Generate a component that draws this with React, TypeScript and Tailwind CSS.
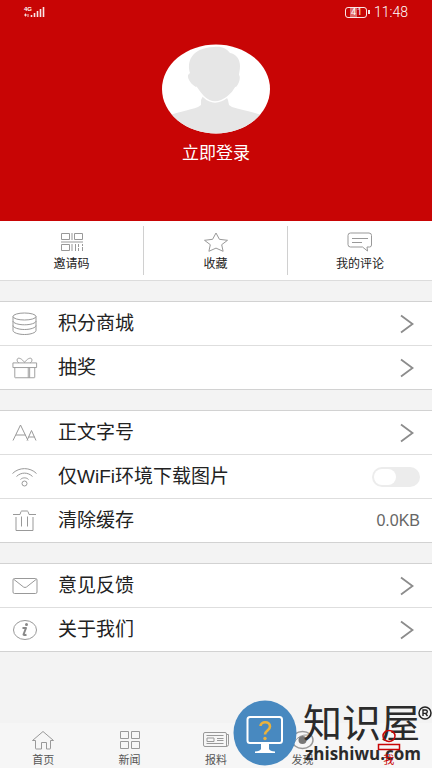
import { useState, type ReactNode } from "react";

const SignalIcon = () => (
  <svg width="21" height="12" viewBox="0 0 21 12" fill="none" stroke="#fff">
    <path d="M0 9h3M4 8v3M1.5 7.5v3" strokeWidth="1" opacity="0.8" />
    <path d="M7.5 9v2M10.5 7v4M13.5 5v6M16.5 3v8M19.5 1v10" strokeWidth="1.6" opacity="0.9" />
  </svg>
);

const Avatar = () => (
  <svg width="108" height="90" viewBox="0 0 108 90">
    <defs>
      <clipPath id="avatar-clip">
        <ellipse cx="54" cy="45" rx="54" ry="44.5" />
      </clipPath>
    </defs>
    <g clipPath="url(#avatar-clip)">
      <rect width="108" height="90" fill="#fff" />
      <path
        d="M0 74C12 69 28 66 36 63L39 61L39 56L41 52C46 57 58 57 64 52L66 56L67 61L70 63C80 66 97 69 108 74V90H0Z"
        fill="#e6e6e6"
      />
      <path
        d="M52 3C60 2 65 5 68 9C74 10 78 15 78 22C78 26 77 29 77 31C79 33 77 40 74 43C71 49 62 58 53 58C44 58 38 49 34 43C30 41 25 35 26 31L28 29C25 19 28 4 52 3Z"
        fill="#e6e6e6"
      />
      <path d="M34 43C38 49 44 58 53 58C62 58 71 49 74 43" fill="none" stroke="#fff" strokeWidth="1.5" />
    </g>
  </svg>
);

const Chevron = () => (
  <svg width="14" height="20" viewBox="0 0 14 20" fill="none" stroke="#8c8c8c" strokeWidth="1.8">
    <path d="M1 1.5 12.5 10 1 18.5" />
  </svg>
);

const Line = ({ w, h, children }: { w: number; h: number; children: ReactNode }) => (
  <svg
    width={w}
    height={h}
    viewBox={`0 0 ${w} ${h}`}
    fill="none"
    stroke="#999"
    strokeWidth="1"
    strokeLinejoin="round"
  >
    {children}
  </svg>
);

const shortcuts = [
  {
    label: "邀请码",
    icon: (
      <Line w={24} h={20}>
        <path d="M1.5 1.5h8v6h-8zM14.5 1.5h8v6h-8zM1.5 12.5h8v6h-8zM12 1v7M1 10h22M12 12v7M15.5 12v7M18.5 12v3M18.5 16v3M22.5 12v2M22.5 15v4" />
      </Line>
    ),
  },
  {
    label: "收藏",
    icon: (
      <Line w={26} h={20}>
        <path d="m13 1 3.4 6.3 8.1 1-5.8 4.4 1.4 6.6-7.1-3.2-7.1 3.2 1.4-6.6L1.5 8.3l8.1-1z" />
      </Line>
    ),
  },
  {
    label: "我的评论",
    icon: (
      <Line w={26} h={20}>
        <path d="M3.5 1h18.5q2.5 0 2.5 2.5v9.5q0 2-2 2h-2.5l.5 4-5-4h-12q-2.5 0-2.5-2.5v-9q0-2.5 2.5-2.500zM5 6.500h16M5 10.500h10" />
      </Line>
    ),
  },
];

type Item = { label: string; icon: ReactNode; kind?: "switch" | "value" };

const groups: Item[][] = [
  [
    {
      label: "积分商城",
      icon: (
        <Line w={26} h={24}>
          <ellipse cx="12.5" cy="4.5" rx="11.5" ry="3.5" />
          <path d="M1 4.5v14c0 2 5 4 11.5 4s11.5-2 11.5-4v-14M1 9c0 2 5 3.8 11.5 3.8S24 11 24 9M1 13.5c0 2 5 4 11.5 4s11.5-2 11.5-4" />
        </Line>
      ),
    },
    {
      label: "抽奖",
      icon: (
        <Line w={28} h={24}>
          <path d="M1 6.5h25.5v5H1zM3 11.5v10.5q0 .5.5.5h20.5q.5 0 .5-.5v-10.5M17.5 11.5v11M19 11.5v11M13.5 6C10 1 5.5 0 5.5 3.5c0 1.5 1 2.5 2 3M13.500 6C17 1 21.5 0 21.5 3.5c0 1.5-1 2.5-2 3" />
        </Line>
      ),
    },
  ],
  [
    {
      label: "正文字号",
      icon: (
        <Line w={26} h={18}>
          <path d="M1 16.5 8.5 1l7.5 15.5M4 11h9.5M15 16.5l4.5-10 4.5 10M16.5 13h6" />
        </Line>
      ),
    },
    {
      label: "仅WiFi环境下载图片",
      kind: "switch",
      icon: (
        <Line w={26} h={20}>
          <path d="M.5 6.5C7 0 18 0 24.5 6.5M4.5 9.5c4.5-4.5 11.5-4.5 16 0M8.5 12.5c2-2.2 6-2.2 8 0" />
          <circle cx="12.5" cy="16.5" r="2.5" />
        </Line>
      ),
    },
    {
      label: "清除缓存",
      kind: "value",
      icon: (
        <Line w={26} h={22}>
          <path d="M1 4.5h7l1-3q.3-.5 1-.5h5q.7 0 1 .5l1 3h7M4 7v13.5h17V7M9.5 6.5v10M15.5 6.5v10" />
        </Line>
      ),
    },
  ],
  [
    {
      label: "意见反馈",
      icon: (
        <Line w={26} h={18}>
          <rect x="1" y="1.5" width="24" height="15" rx="1.5" />
          <path d="m2 2.5 9.5 7.5q1.5 1 3 0L24 2.5" />
        </Line>
      ),
    },
    {
      label: "关于我们",
      icon: (
        <Line w={26} h={22}>
          <ellipse cx="13" cy="11" rx="11.5" ry="9.5" />
          <path d="M10.5 9h3.5l-2.5 6.5q0 1 3 .2" strokeWidth="2" stroke="#888" />
          <circle cx="14.5" cy="5.5" r="1.5" fill="#888" stroke="none" />
        </Line>
      ),
    },
  ],
];

const tabs = [
  {
    label: "首页",
    icon: (
      <Line w={24} h={20}>
        <path d="M4.5 10.5H1.5L12 1.5l10.5 9h-3v8q0 .5-.5.5h-3.5v-6.5h-5V19H5q-.5 0-.5-.5z" />
      </Line>
    ),
  },
  {
    label: "新闻",
    icon: (
      <Line w={24} h={20}>
        <path d="M2.5 1.5h8v7h-8zM13.5 1.5h8v7h-8zM2.5 11.5h8v7h-8zM13.5 11.5h8v7h-8z" />
      </Line>
    ),
  },
  {
    label: "报料",
    icon: (
      <Line w={28} h={18}>
        <path d="M25 3.5h1.5v10q0 2-2.5 2M3 1.5h20q1.5 0 1.5 1.5v12.5H3q-1.5 0-1.5-1.5V3q0-1.5 1.5-1.5zM4.5 4.5h17M15 7.5h6.5M15 9.5h6.5M4.5 12.5h17M5 7h7v3.5H5z" />
      </Line>
    ),
  },
  {
    label: "发现",
    icon: (
      <Line w={24} h={20}>
        <ellipse cx="12.5" cy="10" rx="10.5" ry="8.5" strokeWidth="1.5" />
        <path d="M4 13q4-9 15-8" />
        <circle cx="12.5" cy="10" r="4" fill="#777" stroke="none" />
      </Line>
    ),
  },
];

const Watermark = () => (
  <div className="pointer-events-none absolute right-0 bottom-0 flex items-end gap-1.5">
    <svg width="64" height="66" viewBox="0 0 64 66" className="mb-0.5">
      <ellipse cx="32" cy="33" rx="31.5" ry="32.5" fill="#4889c0" />
      <rect x="14.5" y="17" width="34.5" height="26" rx="2.5" fill="none" stroke="#fff" strokeWidth="2" />
      <path d="M28 43h8v6q1 2 6 2.5v1.5H22v-1.5q5-.5 6-2.5z" fill="#fff" />
      <path d="M27.5 26c0-5 9.5-5 9.5.5 0 4-5 4-5 8" fill="none" stroke="#e9b23d" strokeWidth="2.6" />
      <circle cx="32" cy="38.5" r="1.7" fill="#e9b23d" />
    </svg>
    <div className="flex flex-col pb-1 text-[#2b2b2b]">
      <div className="flex items-start">
        <span className="text-[39px] leading-10">知识屋</span>
        <svg width="14" height="14" viewBox="0 0 14 14" fill="none" stroke="#222" className="mt-0.5 -ml-0.5">
          <circle cx="7" cy="7" r="6" strokeWidth="1.5" />
          <path d="M5 10V4h2.5q1.8 0 1.8 1.7T7.5 7.4H5m2.5 0L9.5 10" strokeWidth="1.4" />
        </svg>
      </div>
      <span className="pl-0.5 font-['Open_Sans',sans-serif] text-[17px] leading-5 font-bold">zhishiwu.com</span>
    </div>
  </div>
);

export default function App() {
  const [wifiOnly, setWifiOnly] = useState(false);

  return (
    <div className="relative flex min-h-screen flex-col bg-[#f3f3f3] font-['Liberation_Sans','Noto_Sans_CJK_SC',sans-serif] text-[#222]">
      {/* Profile header */}
      <header className="flex flex-col items-center bg-[#c80505] pb-[55px] text-white">
        <div className="flex h-6 w-full items-center justify-between px-6">
          <div className="flex items-center">
            <span className="relative">
              <SignalIcon />
              <span className="absolute top-0 left-0 text-[6px] leading-[6px] font-bold">4G</span>
            </span>
          </div>
          <div className="flex items-center gap-1 font-['Roboto',sans-serif] text-[14px] leading-4">
            <span className="flex items-center gap-px">
              <span className="flex h-[11px] w-[22px] items-center justify-center rounded-[3px] border border-white/90 text-[9px] leading-none">
                <span className="bg-white/40 px-px">4</span>1
              </span>
              <span className="h-1 w-0.5 bg-white/90" />
            </span>
            <span className="font-light">11:48</span>
          </div>
        </div>
        <button type="button" className="mt-5 flex flex-col items-center">
          <Avatar />
          <span className="mt-2 text-[17px] leading-6">立即登录</span>
        </button>
      </header>

      {/* Shortcuts */}
      <section className="grid grid-cols-3 divide-x divide-[#d0d0d0] border-b border-[#dcdcdc] bg-white py-[5px]">
        {shortcuts.map((s) => (
          <button key={s.label} type="button" className="flex h-[49px] flex-col items-center gap-1 pt-1.5 text-[12px] leading-4">
            {s.icon}
            {s.label}
          </button>
        ))}
      </section>

      {/* Settings */}
      <main className="flex flex-1 flex-col gap-5 pt-5 pb-6">
        {groups.map((group, i) => (
          <ul key={i} className="divide-y divide-[#dedede] border-y border-[#d2d2d2] bg-white">
            {group.map((item) => {
              const inner = (
                <>
                  <span className="flex w-[26px] shrink-0 justify-center">{item.icon}</span>
                  <span className="flex-1 text-left text-[19px] leading-6">{item.label}</span>
                </>
              );
              return (
                <li key={item.label}>
                  {item.kind === "switch" ? (
                    <label className="flex h-[43px] items-center gap-5 px-3">
                      {inner}
                      <input
                        type="checkbox"
                        checked={wifiOnly}
                        onChange={(e) => setWifiOnly(e.target.checked)}
                        className="flex h-5 w-12 appearance-none items-center rounded-full bg-[#ececec] px-0.5 before:h-4 before:w-[22px] before:rounded-full before:bg-white checked:justify-end checked:bg-[#c80505]"
                      />
                    </label>
                  ) : (
                    <button type="button" className="flex h-[43px] w-full items-center gap-5 px-3">
                      {inner}
                      {item.kind === "value" ? (
                        <span className="text-[16px] text-[#666]">0.0KB</span>
                      ) : (
                        <span className="pr-1.5">
                          <Chevron />
                        </span>
                      )}
                    </button>
                  )}
                </li>
              );
            })}
          </ul>
        ))}
      </main>

      <Watermark />

      {/* Bottom tabs */}
      <nav className="grid h-[45px] grid-cols-5 bg-[#f6f6f6] text-[11px] leading-4 text-[#555]">
        {tabs.map((tab) => (
          <button key={tab.label} type="button" className="flex flex-col items-center justify-end">
            <span className="flex h-6 items-center">{tab.icon}</span>
            {tab.label}
          </button>
        ))}
        <button type="button" className="relative flex flex-col items-center justify-end text-[#c80505]">
          <svg width="24" height="24" viewBox="0 0 24 24" fill="none" stroke="#c80505" strokeWidth="1.5">
            <ellipse cx="12" cy="8" rx="6" ry="5.5" />
            <path d="M1.5 21.5v-5h21v5z" />
          </svg>
          我
        </button>
      </nav>
    </div>
  );
}
